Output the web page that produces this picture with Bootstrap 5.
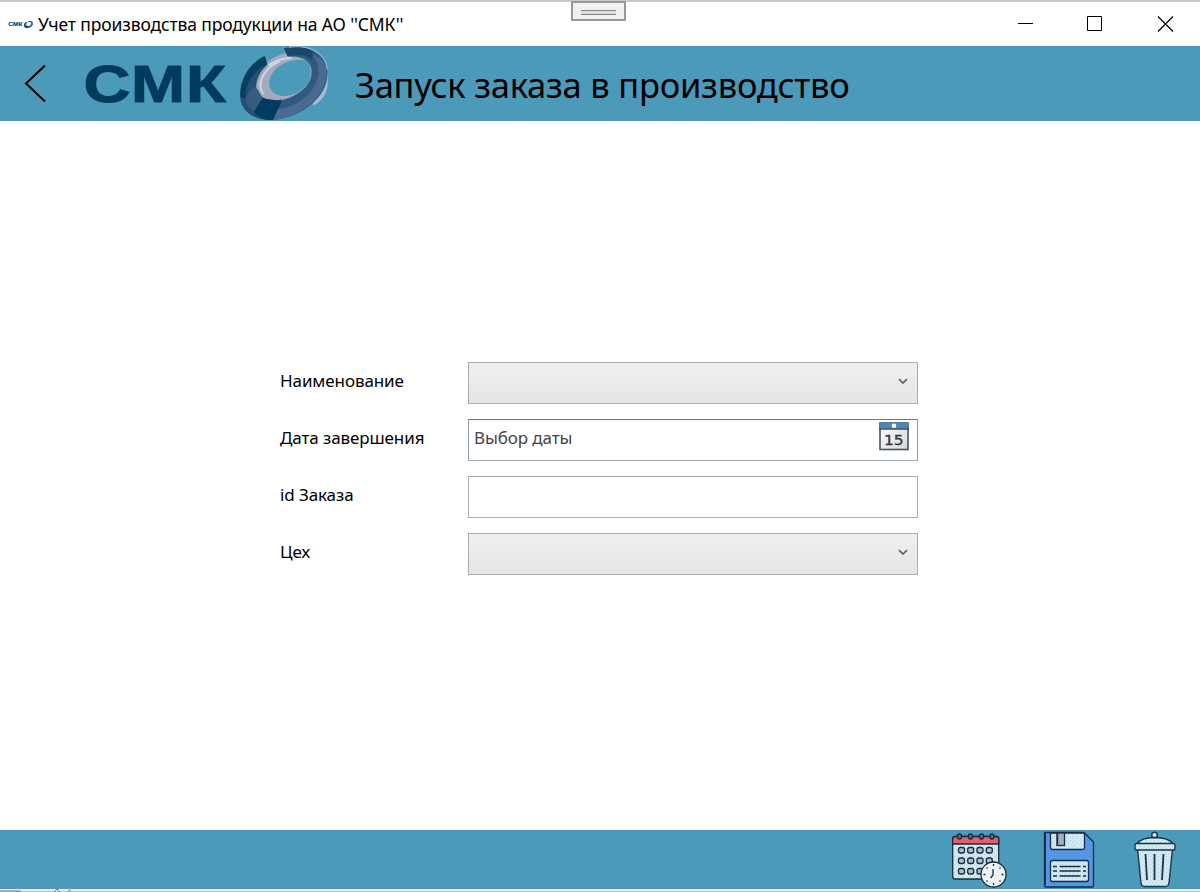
<!DOCTYPE html>
<html lang="ru">
<head>
<meta charset="utf-8">
<meta name="viewport" content="width=device-width, initial-scale=1">
<title>Учет производства продукции</title>
<link href="https://cdn.jsdelivr.net/npm/bootstrap@5.3.0/dist/css/bootstrap.min.css" rel="stylesheet">
<style>
body{font-family:"Noto Sans","Open Sans",sans-serif;color:#000;height:100vh;overflow:hidden;background:#fff}
svg{display:block;flex:none}
.titlebar{height:46px;border-top:2px solid #c8c8c8;padding-left:8px;padding-right:26px}
.title-text{font-size:17.500px;line-height:24px;margin:0 0 1px 5px;letter-spacing:-.13px;white-space:nowrap}
.grip{left:571px;top:1px;width:55px;height:20px;border:2px solid #999;background:#f0f0f2;padding:7px 8px}
.grip span{display:block;height:5px;border-top:1px solid #888;border-bottom:1px solid #888;background:#ddd}
.app-head{height:75px;background:#4b9aba}
.page-title{font-size:34.500px;line-height:48px;margin:3px 0 0 19px;font-weight:400;letter-spacing:-.24px;white-space:nowrap}
.order-form{width:638px;margin-left:280px;padding-top:241px;gap:15px}
.form-line{height:42px}
.form-line label{width:188px;font-size:17px;line-height:24px;padding-bottom:4px;letter-spacing:-.1px;white-space:nowrap}
.field{width:450px;height:42px;border:1px solid #acacac;padding:0 9px 4px 5px;font-size:17px}
.field.combo{background:linear-gradient(#f0f0f0,#e5e5e5)}
.field.date{height:42px;border-color:#667e91 #8b9eab #a5b1ba;color:#444;padding-right:8px;padding-bottom:5px;letter-spacing:-.1px}
.date-icon{margin-bottom:2px}
.app-foot{height:59px;background:#4b9aba;padding-right:20px}
.edge{height:3px;background:linear-gradient(#e9edef 0 2px,#c4c4c4 2px)}
</style>
</head>
<body class="d-flex flex-column">
<svg width="0" height="0" class="position-absolute" aria-hidden="true">
<defs>
<pattern id="dots" width="4" height="4" patternUnits="userSpaceOnUse"><rect width="4" height="4" fill="#d8e8ef"/><path d="M0 0h1v1H0zM2 2h1v1H2z" fill="#aecbd8"/></pattern>
<symbol id="logo" viewBox="0 0 250 75">
<g font-family="Liberation Sans, Arial, sans-serif" font-weight="700" font-size="52" fill="#003b5c" stroke="#003b5c" stroke-width="1"><text x="3.500" y="56" textLength="47" lengthAdjust="spacingAndGlyphs">С</text><text x="51" y="56" textLength="54" lengthAdjust="spacingAndGlyphs">М</text><text x="106" y="56" textLength="40" lengthAdjust="spacingAndGlyphs">К</text></g>
<g transform="translate(150 -6) scale(.33333)">
<path d="M288 75C300 130 294 165 262 190L248 197 258 150Z" fill="#a3bdd0"/>
<path fill-rule="evenodd" d="M108 70C122 55 146 45 168 39L176 52C212 45 245 55 245 92C245 137 205 182 150 183C106 188 77 173 78 139C80 116 92 92 111 78ZM234 63C205 54 160 62 133 92C105 125 117 165 160 168C205 168 242 135 242 98C242 82 240 70 234 63Z" fill="#a4aabd"/>
<path d="M116 76C137 60 160 54 184 54M100 162C76 130 105 82 149 64" fill="none" stroke="#d0d7e4" stroke-width="6"/>
<path d="M104 48C62 68 30 114 30 163C30 212 67 242 130 240L157 178C119 187 84 174 79 144C76 119 92 92 112 73Z" fill="#264d72"/>
<path d="M104 48C62 68 30 114 32 171L47 176C43 130 71 92 112 73Z" fill="#083e62"/>
<path d="M47 174C58 148 70 137 82 148L99 175L75 216C55 205 45 189 47 174Z" fill="#355d80"/>
<path d="M97 175L156 184L130 240C101 241 80 229 72 215Z" fill="#003b60"/>
<path d="M162 25C230 11 286 39 292 91C300 165 221 231 130 240L157 180C208 168 248 132 245 92C243 61 214 47 173 49Z" fill="#315a80"/>
<path d="M245 43C278 53 293 76 291 102C285 171 220 227 130 240L144 208C205 203 260 154 265 103C267 77 260 60 245 43Z" fill="#496b91"/>
<path d="M162 25C199 15 231 22 249 34L246 60C229 45 203 43 173 49Z" fill="#1b466b"/>
<path d="M177 22C236 13 285 36 292 87" fill="none" stroke="#a3bdd0" stroke-width="3"/>
</g>
</symbol>
</defs>
</svg>

<header class="titlebar d-flex align-items-center flex-shrink-0 position-relative">
<svg width="25" height="9" viewBox="0 0 250 75"><use href="#logo" width="250" height="75"/></svg>
<span class="title-text">Учет производства продукции на АО ''СМК''</span>
<svg class="ms-auto" width="157" height="16" viewBox="0 0 157 16" fill="none" stroke="#000"><path d="M1 7.500h15M70.500.500h14v14h-14z"/><path d="M141 .500l15 15M156 .500l-15 15" stroke-width="1.200"/></svg>
</header>
<div class="grip position-absolute"><span></span></div>

<nav class="app-head d-flex align-items-center flex-shrink-0">
<svg width="81" height="75" viewBox="0 0 81 75" fill="none" stroke="#000" stroke-width="2"><path d="M45 19.500L26 37.500 45 55.500"/></svg>
<svg width="255" height="75" viewBox="0 0 255 75"><use href="#logo" width="250" height="75" x="-1"/></svg>
<h1 class="page-title">Запуск заказа в производство</h1>
</nav>

<main class="flex-grow-1">
<form class="order-form d-flex flex-column">
<div class="form-line d-flex align-items-center"><label>Наименование</label><div class="field combo d-flex align-items-center justify-content-end"><svg width="10" height="6" viewBox="0 0 10 6" fill="none" stroke="#606060" stroke-width="1.700"><path d="M1 1.200L5 5 9 1.200"/></svg></div></div>
<div class="form-line d-flex align-items-center"><label>Дата завершения</label><div class="field date d-flex align-items-center justify-content-between"><span class="date-text">Выбор даты</span>
<svg class="date-icon" width="30" height="29" viewBox="0 0 30 29"><defs><linearGradient id="cg" x2="1" y2="1"><stop stop-color="#fff"/><stop offset="1" stop-color="#d3d7dc"/></linearGradient></defs><rect x="1" y="1" width="28" height="26.500" fill="url(#cg)" stroke="#4c555e" stroke-width="1.600"/><path d="M.500.500h29v6h-29z" fill="#4688bb"/><path d="M0 7h30" stroke="#35485a" stroke-width="1.500"/><circle cx="15" cy="3.800" r="2.300" fill="#fff"/><text x="5" y="22.500" font-family="DejaVu Sans" font-size="14.500" fill="#333" stroke="#333" stroke-width=".3" textLength="19.500" lengthAdjust="spacingAndGlyphs">15</text></svg></div></div>
<div class="form-line d-flex align-items-center"><label>id Заказа</label><div class="field"></div></div>
<div class="form-line d-flex align-items-center"><label>Цех</label><div class="field combo d-flex align-items-center justify-content-end"><svg width="10" height="6" viewBox="0 0 10 6" fill="none" stroke="#606060" stroke-width="1.700"><path d="M1 1.200L5 5 9 1.200"/></svg></div></div>
</form>
</main>

<footer class="app-foot d-flex justify-content-end flex-shrink-0">
<svg width="80" height="59" viewBox="0 8 80 59" stroke="#1b2b3b" stroke-width="1.300">
<rect x="12.700" y="14.500" width="46" height="42.500" rx="2.500" fill="url(#dots)"/><path d="M12.700 22V17q0-2.500 2.500-2.500h41q2.500 0 2.500 2.500v5z" fill="#e05f6b"/>
<g fill="#58707f"><rect x="17.500" y="12" width="4" height="5" rx="2"/><rect x="28.500" y="12" width="4" height="5" rx="2"/><rect x="39.500" y="12" width="4" height="5" rx="2"/><rect x="50" y="12" width="4" height="5" rx="2"/></g>
<g fill="#a8c1cd"><rect x="18.500" y="25.500" width="6" height="5.500" rx="2"/><rect x="27.700" y="25.500" width="6" height="5.500" rx="2"/><rect x="37" y="25.500" width="6" height="5.500" rx="2"/><rect x="46.300" y="25.500" width="6" height="5.500" rx="2"/><rect x="18.500" y="36" width="6" height="5.500" rx="2"/><rect x="27.700" y="36" width="6" height="5.500" rx="2"/><rect x="37" y="36" width="6" height="5.500" rx="2"/><rect x="46.300" y="36" width="6" height="5.500" rx="2"/><rect x="18.500" y="46.500" width="6" height="5.500" rx="2"/><rect x="27.700" y="46.500" width="6" height="5.500" rx="2"/><rect x="37" y="46.500" width="6" height="5.500" rx="2"/></g>
<circle cx="53.500" cy="52.500" r="12.500" fill="#edf3f5"/><path d="M53 47v6l-2.500 3M53.500 42v2M53.500 61v2M43.500 52.500h2M61.500 52.500h2M46.500 45.500l1 1M60.500 45.500l-1 1M46.500 59.500l1-1M60.500 59.500l-1-1" fill="none"/>
</svg>
<svg width="80" height="59" viewBox="0 8 80 59" stroke="#132d4b" stroke-width="1.300">
<path d="M25 10.500h39l9.500 9.500v44q0 1-1 1H25.500q-1 0-1-2V11z" fill="#5597e2"/><path d="M25 11v52" stroke-width="2"/>
<path d="M30.500 11h34v15q0 1.500-2 1.500H32.500q-2 0-2-2z" fill="url(#dots)"/><rect x="37" y="11" width="7.500" height="12.500" fill="#a7aeb7"/><path d="M37.500 11v12"/>
<rect x="30.500" y="38.500" width="38" height="21" rx="2" fill="url(#dots)"/><path d="M33 44.500h4M39.500 44.500h21M63 44.500h3M33 49h4M39.500 49h21M63 49h3M33 54h4M39.500 54h21M63 54h3" fill="none"/>
</svg>
<svg width="80" height="59" viewBox="0 8 80 59" stroke="#18354b" stroke-width="1.400">
<g fill="url(#dots)"><path d="M37.500 27h35L69 61q-.500 3.500-4 3.500H45q-3.500 0-4-3.500z"/><path d="M37 22C40 17 47 15.500 54.500 15.500S70 17 73 22z"/><rect x="35" y="21.500" width="40" height="6.500" rx="1.800"/><circle cx="54.500" cy="13" r="2.800"/></g>
<path d="M45.500 32l1.500 26M54.500 32v26M63.500 32L62 58" fill="none" stroke-width="1.800"/>
</svg>
</footer>
<div class="edge flex-shrink-0"><svg width="80" height="3" viewBox="0 0 80 3"><path d="M0 2h21M54 3l3-3 3 3M68 2l3-1" stroke="#777" fill="none"/></svg></div>
<script src="https://cdn.jsdelivr.net/npm/bootstrap@5.3.0/dist/js/bootstrap.bundle.min.js"></script>
</body>
</html>
